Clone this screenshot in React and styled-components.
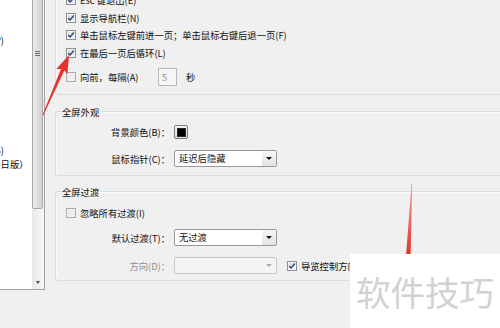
import React from 'react';
import styled, { createGlobalStyle } from 'styled-components';

const GlobalStyle = createGlobalStyle`
  html, body {
    margin: 0;
    padding: 0;
    background: #f0f0f0;
  }
  body {
    font-family: "Noto Sans CJK SC", "Noto Sans", sans-serif;
  }
`;

const Screen = styled.div`
  position: relative;
  width: 500px;
  height: 328px;
  overflow: hidden;
  display: flex;
  align-items: flex-start;
  background: #f0f0f0;
  font-size: 9.3px;
  color: #111;
`;

const LeftPane = styled.div`
  display: flex;
  width: 45px;
  height: 290px;
  flex-shrink: 0;
  box-sizing: border-box;
  border-bottom: 1px solid #a3a3a3;
`;

const List = styled.div`
  width: 32px;
  background: #fff;
  overflow: hidden;
  padding-top: 6.6px;
  box-sizing: border-box;
`;

const ListRow = styled.div`
  display: flex;
  justify-content: flex-end;
  height: 13.75px;
  line-height: 13.75px;
  white-space: nowrap;
  padding-right: ${p => p.$tail}px;
`;

const Scrollbar = styled.div`
  width: 12px;
  border-right: 1px solid #a0a0a0;
  background: linear-gradient(90deg, #e8e8e8, #f6f6f6);
  display: flex;
  flex-direction: column;
  overflow: hidden;
`;

const Thumb = styled.div`
  flex-shrink: 0;
  margin-top: -20px;
  height: 229px;
  width: 11px;
  box-sizing: border-box;
  border: 1px solid #a8a8a8;
  border-radius: 2px;
  background: linear-gradient(90deg, #ececec, #d2d2d2);
  display: flex;
  flex-direction: column;
  align-items: center;
  gap: 1px;
  padding-top: 70px;
`;

const Grip = styled.span`
  width: 5px;
  height: 1px;
  background: #707070;
`;

const Track = styled.div`
  flex: 1;
`;

const ScrollButton = styled.div`
  height: 14px;
  display: flex;
  align-items: center;
  justify-content: center;
`;

const DownArrow = styled.span`
  width: 0;
  height: 0;
  border-left: 2.5px solid transparent;
  border-right: 2.5px solid transparent;
  border-top: 3px solid #4a4a4a;
`;

const Main = styled.div`
  flex: 1;
  min-width: 0;
  padding-left: 10px;
  display: flex;
  flex-direction: column;
`;

const Group = styled.div`
  width: 480px;
  flex-shrink: 0;
  box-sizing: border-box;
  border: 1px solid #d5dfe5;
  border-radius: 3px;
  box-shadow: inset 1px 1px 0 #fafafa;
  margin-top: ${p => p.$top}px;
  padding-top: ${p => p.$padTop || 0}px;
  padding-bottom: ${p => p.$padBottom}px;
`;

const GroupTitle = styled.div`
  width: fit-content;
  margin: -5px 0 0 5px;
  padding: 0 1px;
  line-height: 11px;
  background: #f0f0f0;
`;

const CheckRow = styled.div`
  display: flex;
  align-items: center;
  height: 17.5px;
  padding-left: 10px;
  margin-top: ${p => p.$top || 0}px;
`;

const Box = styled.span`
  width: 10px;
  height: 10px;
  flex-shrink: 0;
  box-sizing: border-box;
  border: 1px solid ${p => (p.$faint ? '#a9a9a9' : '#8e8f8f')};
  background: ${p =>
    p.$faint
      ? 'linear-gradient(135deg, #e4e4e4, #f4f4f4)'
      : 'linear-gradient(135deg, #d8d8d8, #f8f8f8)'};
  box-shadow: inset 0 0 0 1px #f4f4f4;
  display: flex;
  align-items: center;
  justify-content: center;
`;

const CheckText = styled.span`
  margin-left: 4px;
  white-space: nowrap;
  width: ${p => (p.$w ? `${p.$w}px` : 'auto')};
  flex-shrink: 0;
  color: ${p => (p.$muted ? '#8d8d8d' : 'inherit')};
`;

const InlineRow = styled.div`
  display: flex;
  align-items: center;
  height: 18px;
  padding-left: 10px;
  margin-top: 6.5px;
`;

const NumberBox = styled.span`
  width: 19px;
  height: 18px;
  box-sizing: border-box;
  border: 1px solid #b8b8b8;
  background: #f6f6f6;
  color: #8a8a8a;
  padding-left: 3px;
  line-height: 16px;
`;

const Unit = styled.span`
  margin-left: 9px;
`;

const FormRow = styled.div`
  display: grid;
  grid-template-columns: 114px auto auto;
  column-gap: 4px;
  align-items: center;
  justify-content: start;
  margin-top: ${p => p.$top}px;
`;

const Label = styled.span`
  text-align: right;
  white-space: nowrap;
  color: ${p => (p.$muted ? '#8d8d8d' : 'inherit')};
`;

const Swatch = styled.span`
  width: 14px;
  height: 14px;
  box-sizing: border-box;
  border: 1px solid #7c7c7c;
  border-radius: 2px;
  padding: 1.5px;
  background: linear-gradient(#f4f4f4, #dcdcdc);
  display: flex;
`;

const SwatchFill = styled.span`
  flex: 1;
  background: #000;
  border: 1px solid #2a2a2a;
`;

const Select = styled.div`
  width: 103px;
  height: 17px;
  box-sizing: border-box;
  border: 1px solid ${p => (p.$disabled ? '#c9c9c9' : '#999')};
  border-radius: 2px;
  background: ${p => (p.$disabled ? '#f4f4f4' : '#fff')};
  display: flex;
  align-items: stretch;
`;

const SelectText = styled.span`
  flex: 1;
  padding-left: 4px;
  line-height: 15px;
  white-space: nowrap;
`;

const SelectButton = styled.span`
  width: 14px;
  display: flex;
  align-items: center;
  justify-content: center;
  background: ${p => (p.$disabled ? 'transparent' : 'linear-gradient(#f7f7f7, #e2e2e2)')};
`;

const Caret = styled.span`
  width: 0;
  height: 0;
  border-left: 3px solid transparent;
  border-right: 3px solid transparent;
  border-top: 3px solid ${p => (p.$disabled ? '#a9a9a9' : '#111')};
`;

const Trailing = styled.div`
  display: flex;
  align-items: center;
  margin-left: 6px;
  white-space: nowrap;
`;

const Marks = styled.svg`
  position: absolute;
  left: 0;
  top: 0;
  pointer-events: none;
`;

const Watermark = styled.div`
  position: absolute;
  left: 350px;
  top: 254px;
  width: 150px;
  height: 74px;
  background: #fff;
  display: flex;
  align-items: center;
  padding-left: 6px;
  box-sizing: border-box;
  font-size: 34.5px;
  color: #d2d2d2;
  white-space: nowrap;
`;

const listRows = [
  { text: '', tail: 0 },
  { text: '', tail: 0 },
  { text: '演示文稿(P)', tail: 28 },
  { text: '', tail: 0 },
  { text: '', tail: 0 },
  { text: '', tail: 0 },
  { text: '', tail: 0 },
  { text: '', tail: 0 },
  { text: '', tail: 0 },
  { text: '', tail: 0 },
  { text: '全屏播放(S)', tail: 28 },
  { text: '全屏播放（日版）', tail: 3.5 },
];

const Check = ({ checked, faint }) => (
  <Box $faint={faint}>
    {checked && (
      <svg width="8" height="8" viewBox="0 0 8 8">
        <path d="M1.2 4.1 L3.1 6 L6.9 1.6" fill="none" stroke="#2f4a80" strokeWidth="1.5" />
      </svg>
    )}
  </Box>
);

const Dropdown = ({ value, disabled }) => (
  <Select $disabled={disabled}>
    <SelectText>{value}</SelectText>
    <SelectButton $disabled={disabled}>
      <Caret $disabled={disabled} />
    </SelectButton>
  </Select>
);

export default function App() {
  return (
    <>
      <GlobalStyle />
      <Screen>
        <LeftPane>
          <List>
            {listRows.map((r, i) => (
              <ListRow key={i} $tail={r.tail}>{r.text}</ListRow>
            ))}
          </List>
          <Scrollbar>
            <Thumb>
              <Grip />
              <Grip />
              <Grip />
            </Thumb>
            <Track />
            <ScrollButton>
              <DownArrow />
            </ScrollButton>
          </Scrollbar>
        </LeftPane>

        <Main>
          <Group $top={-25} $padTop={15.5} $padBottom={8}>
            <CheckRow>
              <Check checked />
              <CheckText>Esc 键退出(E)</CheckText>
            </CheckRow>
            <CheckRow>
              <Check checked />
              <CheckText>显示导航栏(N)</CheckText>
            </CheckRow>
            <CheckRow>
              <Check checked />
              <CheckText>单击鼠标左键前进一页；单击鼠标右键后退一页(F)</CheckText>
            </CheckRow>
            <CheckRow>
              <Check checked />
              <CheckText>在最后一页后循环(L)</CheckText>
            </CheckRow>
            <InlineRow>
              <Check faint />
              <CheckText $w={78}>向前，每隔(A)</CheckText>
              <NumberBox>5</NumberBox>
              <Unit>秒</Unit>
            </InlineRow>
          </Group>

          <Group $top={16} $padBottom={8}>
            <GroupTitle>全屏外观</GroupTitle>
            <FormRow $top={7}>
              <Label>背景颜色(B)：</Label>
              <Swatch>
                <SwatchFill />
              </Swatch>
            </FormRow>
            <FormRow $top={11}>
              <Label>鼠标指针(C)：</Label>
              <Dropdown value="延迟后隐藏" />
            </FormRow>
          </Group>

          <Group $top={15} $padBottom={6}>
            <GroupTitle>全屏过渡</GroupTitle>
            <CheckRow $top={6.25}>
              <Check faint />
              <CheckText>忽略所有过渡(I)</CheckText>
            </CheckRow>
            <FormRow $top={7.25}>
              <Label>默认过渡(T)：</Label>
              <Dropdown value="无过渡" />
            </FormRow>
            <FormRow $top={11}>
              <Label $muted>方向(D)：</Label>
              <Dropdown value="" disabled />
              <Trailing>
                <Check checked />
                <CheckText>导览控制方向(R)</CheckText>
              </Trailing>
            </FormRow>
          </Group>
        </Main>

        <Marks width="500" height="328" viewBox="0 0 500 328">
          <defs>
            <linearGradient id="tail" x1="0" y1="0" x2="0" y2="1">
              <stop offset="0" stopColor="#f3a09c" />
              <stop offset="1" stopColor="#e2322c" />
            </linearGradient>
          </defs>
          <polygon
            points="42.6,114.8 61,69 56.3,69.1 69,55 67.4,73.9 64.3,70.4 43.4,115.2"
            fill="#e5322d"
          />
          <polygon points="411.5,184 412.2,184 410.6,256 406,256" fill="url(#tail)" />
        </Marks>

        <Watermark>软件技巧</Watermark>
      </Screen>
    </>
  );
}
